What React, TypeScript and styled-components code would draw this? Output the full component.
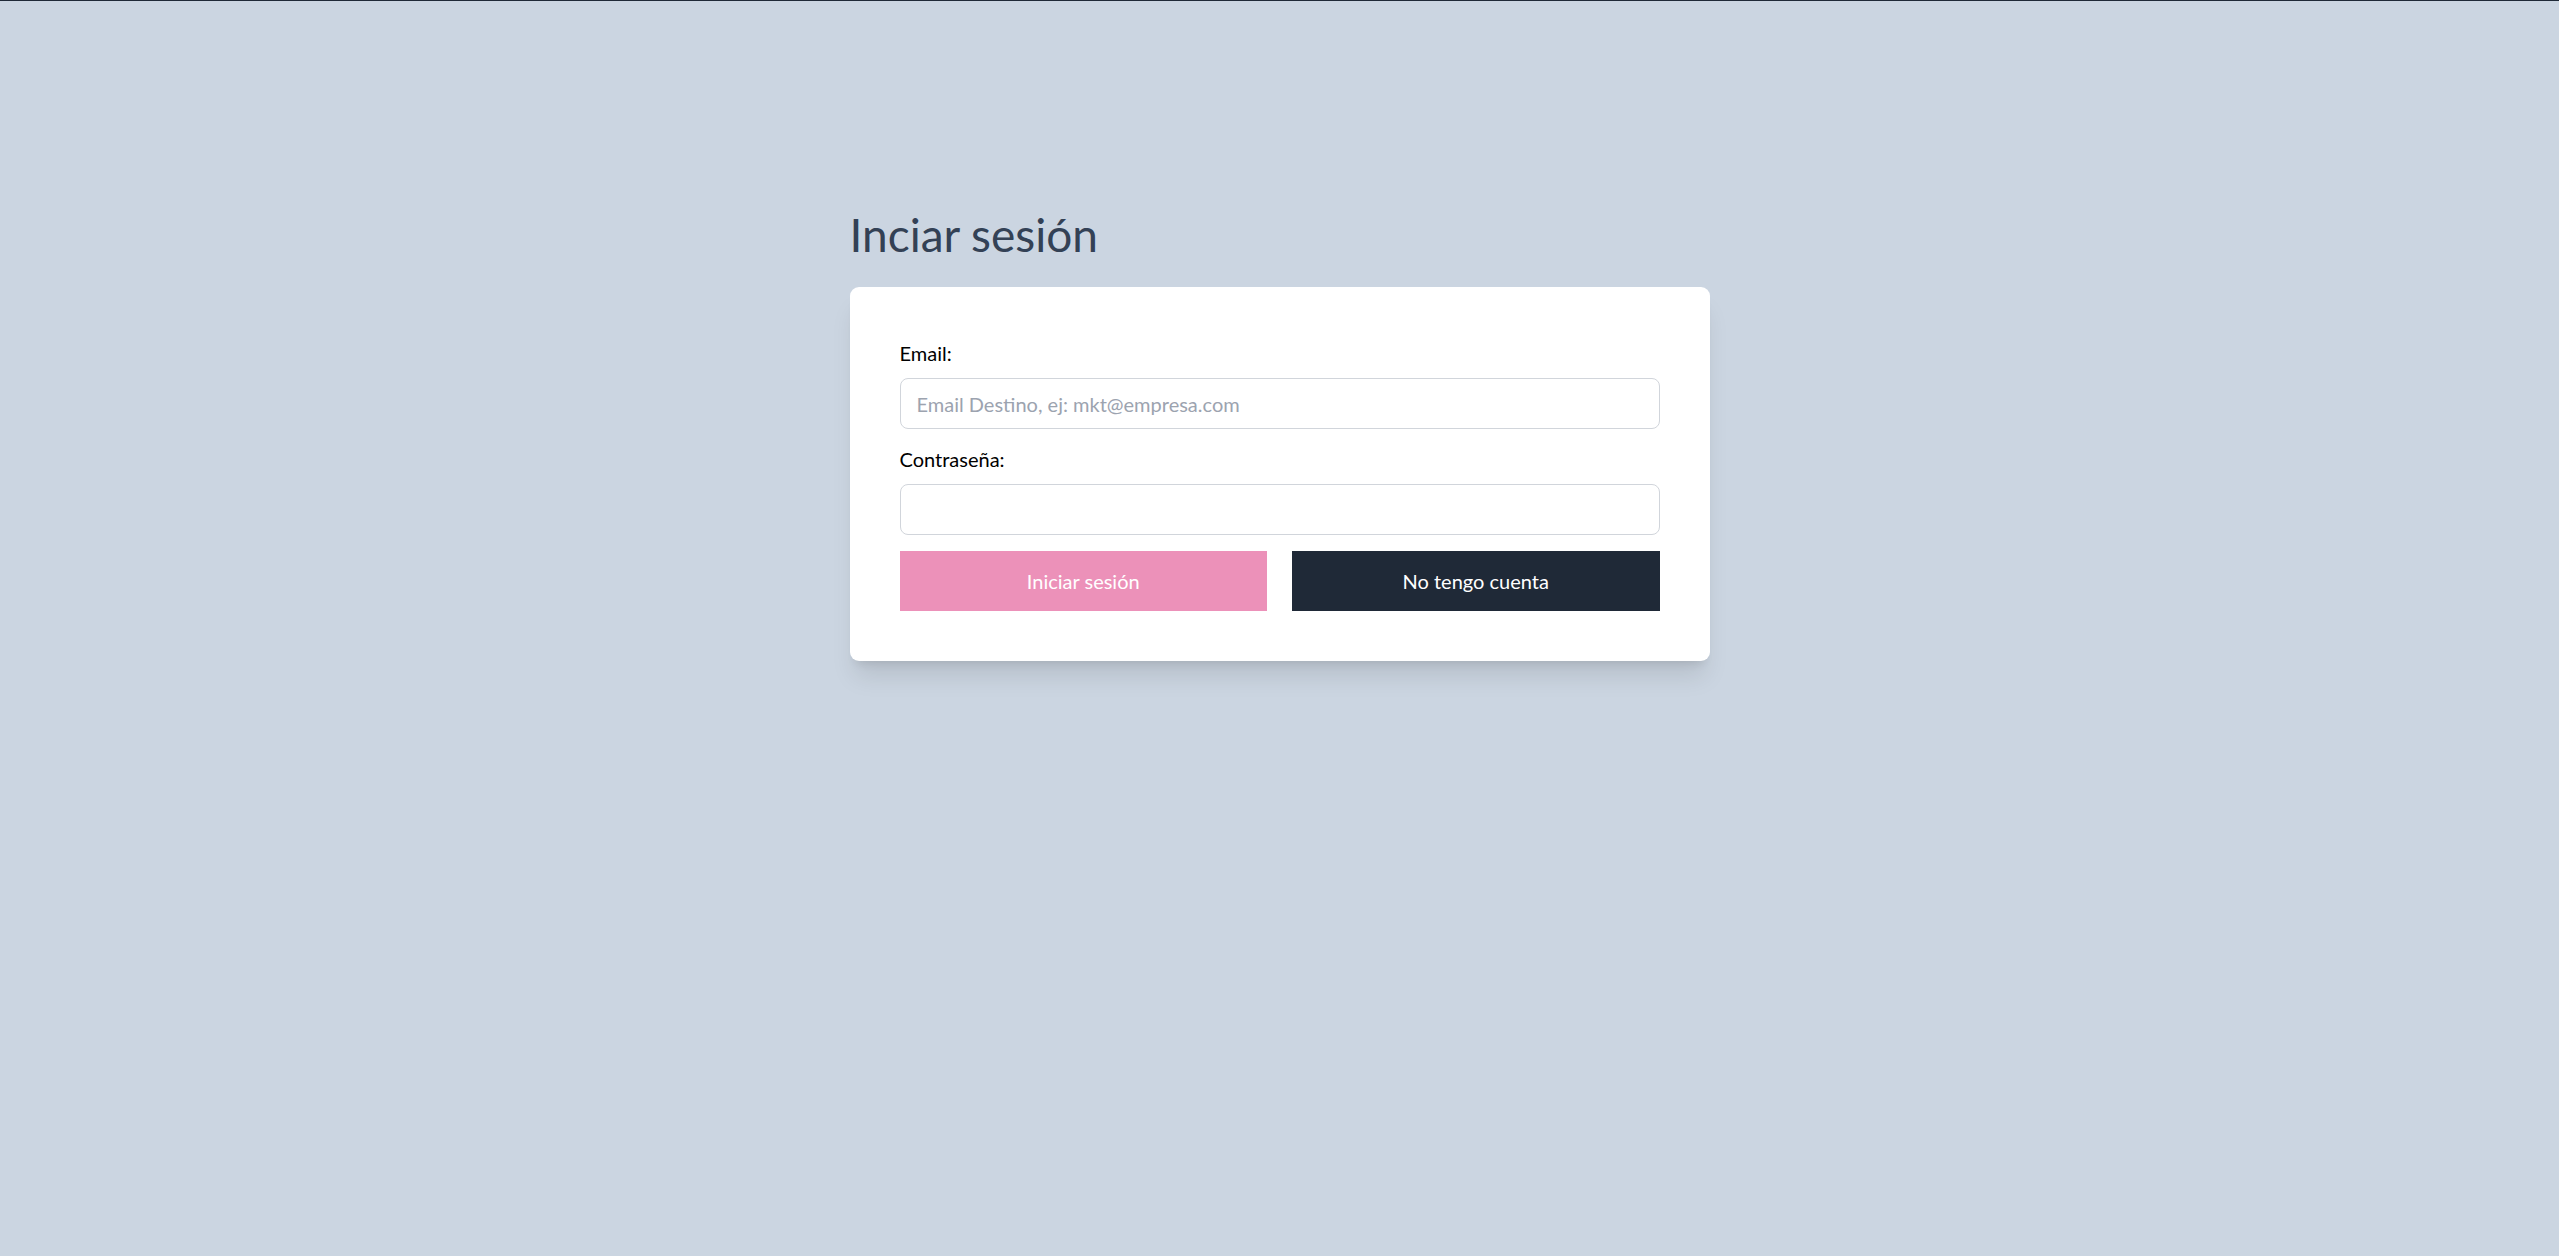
import React from "react";
import styled, { createGlobalStyle } from "styled-components";

const GlobalStyle = createGlobalStyle`
  html, body {
    margin: 0;
    padding: 0;
  }
  body {
    background: #cbd5e1;
    border-top: 1px solid #1f2937;
    font-family: Lato, "Noto Sans", sans-serif;
    min-height: 1255px;
  }
`;

const Page = styled.main`
  display: flex;
  justify-content: center;
  padding-top: 206px;
`;

const Wrapper = styled.div`
  width: 860px;
  display: flex;
  flex-direction: column;
`;

const Title = styled.h1`
  margin: 0 0 24px;
  font-size: 46px;
  line-height: 56px;
  font-weight: 400;
  color: #334155;
`;

const Card = styled.form`
  background: #ffffff;
  border-radius: 9px;
  padding: 52px 50px 50px;
  display: flex;
  flex-direction: column;
  box-shadow: 0 20px 25px -5px rgba(0, 0, 0, 0.1),
    0 8px 10px -6px rgba(0, 0, 0, 0.1);
`;

const Label = styled.label`
  font-size: 20px;
  line-height: 28px;
  color: #000000;
  margin-bottom: 11px;
`;

const Input = styled.input<{ $last?: boolean }>`
  box-sizing: border-box;
  width: 100%;
  height: 51px;
  padding: 0 16px;
  border: 1px solid #d1d5db;
  border-radius: 8px;
  font-family: inherit;
  font-size: 20px;
  color: #111827;
  outline: none;
  margin-bottom: 16px;

  &::placeholder {
    color: #9ca3af;
  }
`;

const ButtonRow = styled.div`
  display: grid;
  grid-template-columns: 1fr 1fr;
  gap: 25px;
`;

const Button = styled.button<{ $variant: "pink" | "dark" }>`
  height: 60px;
  border: none;
  border-radius: 0;
  font-family: inherit;
  font-size: 20px;
  color: #ffffff;
  cursor: pointer;
  background: ${(p) => (p.$variant === "pink" ? "#ec91b9" : "#1f2937")};
`;

export default function App() {
  return (
    <>
      <GlobalStyle />
      <Page>
        <Wrapper>
          <Title>Inciar sesión</Title>
          <Card onSubmit={(e) => e.preventDefault()}>
            <Label htmlFor="email">Email:</Label>
            <Input
              id="email"
              type="email"
              placeholder="Email Destino, ej: mkt@empresa.com"
            />
            <Label htmlFor="password">Contraseña:</Label>
            <Input id="password" type="password" />
            <ButtonRow>
              <Button type="submit" $variant="pink">
                Iniciar sesión
              </Button>
              <Button type="button" $variant="dark">
                No tengo cuenta
              </Button>
            </ButtonRow>
          </Card>
        </Wrapper>
      </Page>
    </>
  );
}
